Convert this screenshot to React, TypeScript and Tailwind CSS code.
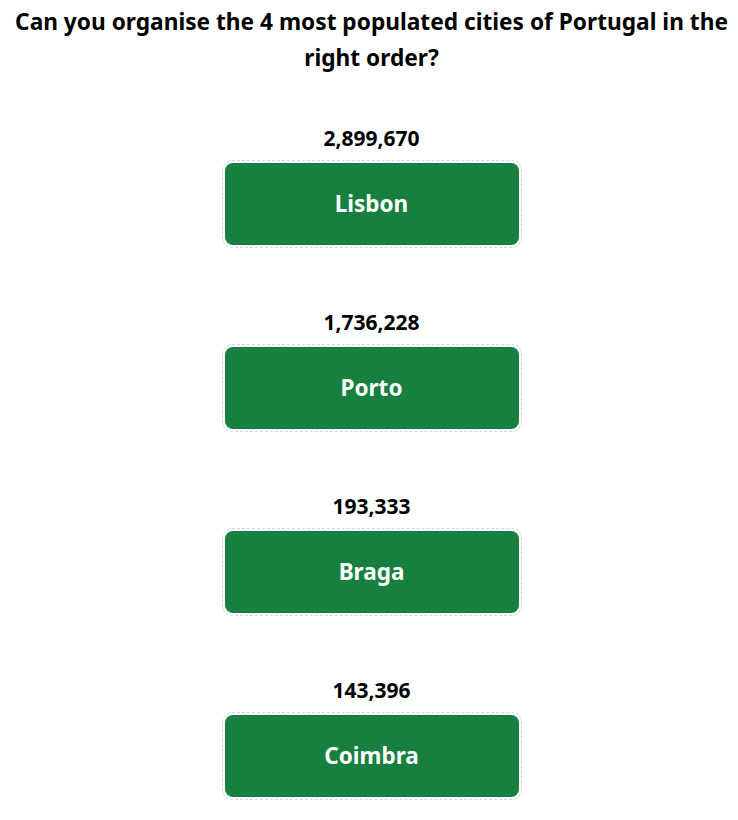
import React from 'react';

const cities = [
  { name: 'Lisbon', population: '2,899,670' },
  { name: 'Porto', population: '1,736,228' },
  { name: 'Braga', population: '193,333' },
  { name: 'Coimbra', population: '143,396' },
];

export default function App() {
  return (
    <div className="min-h-screen bg-white pl-[5px] text-black font-['Noto_Sans',sans-serif]">
      <h1 className="pt-[4px] px-1 text-center text-[22.7px] font-bold leading-[36px]">
        Can you organise the 4 most populated cities of Portugal in the right order?
      </h1>

      <div className="mt-[48px] flex flex-col items-center gap-[60px]">
        {cities.map((city) => (
          <div key={city.name} className="flex flex-col items-center">
            <div className="text-[21px] font-bold leading-[28px]">{city.population}</div>
            <div className="mt-[8px] w-[300px] rounded-[10px] border border-dashed border-gray-300 p-[2px]">
              <div className="flex h-[82px] items-center justify-center rounded-[8px] bg-[#177f40] text-[22.5px] font-bold text-white">
                {city.name}
              </div>
            </div>
          </div>
        ))}
      </div>
    </div>
  );
}
